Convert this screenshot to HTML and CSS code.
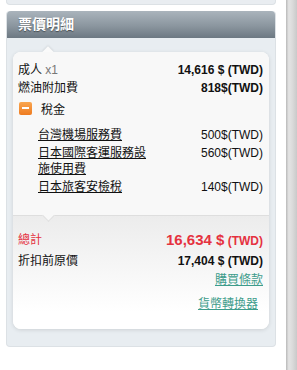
FILE: index.html
```html
<!DOCTYPE html>
<html lang="zh-Hant">
<head>
    <meta charset="UTF-8">
    <meta name="viewport" content="width=device-width, initial-scale=1.0">
    <title>票價明細</title>
    <link rel="stylesheet" href="styles.css">
</head>
<body>
    <div class="page">
        <div class="main">
            <div class="top-panel"></div>

            <div class="fare-panel">
                <div class="fare-header">票價明細</div>
                <div class="fare-body">
                    <div class="card">
                        <div class="card-top">
                            <div class="row">
                                <span>成人 <span class="count">x1</span></span>
                                <span class="amount bold">14,616 $ (TWD)</span>
                            </div>
                            <div class="row">
                                <span>燃油附加費</span>
                                <span class="amount bold">818$(TWD)</span>
                            </div>
                            <div class="tax-head">
                                <span class="toggle"></span>
                                <span>稅金</span>
                            </div>
                            <div class="tax-row">
                                <a class="tax-name" href="#">台灣機場服務費</a>
                                <span class="amount">500$(TWD)</span>
                            </div>
                            <div class="tax-row">
                                <a class="tax-name" href="#">日本國際客運服務設施使用費</a>
                                <span class="amount">560$(TWD)</span>
                            </div>
                            <div class="tax-row">
                                <a class="tax-name" href="#">日本旅客安檢稅</a>
                                <span class="amount">140$(TWD)</span>
                            </div>
                        </div>
                        <div class="card-bottom">
                            <div class="row total">
                                <span>總計</span>
                                <span class="amount bold"><span class="big">16,634 $</span> (TWD)</span>
                            </div>
                            <div class="row sum">
                                <span>折扣前原價</span>
                                <span class="amount bold">17,404 $ (TWD)</span>
                            </div>
                            <div class="link-row">
                                <a href="#" class="teal">購買條款</a>
                            </div>
                            <div class="link-row converter">
                                <a href="#" class="teal">貨幣轉換器</a>
                            </div>
                        </div>
                    </div>
                </div>
            </div>
        </div>
        <div class="edge"></div>
    </div>
</body>
</html>
```

FILE: styles.css
```css
body {
    margin: 0;
    background-color: #ffffff;
    font-family: 'Liberation Sans', Arial, 'Noto Sans CJK TC', sans-serif;
    font-size: 12px;
    color: #111;
}
.page {
    display: flex;
    height: 370px;
}
.main {
    width: 270px;
    padding-left: 6px;
    margin-right: 10px;
}
.edge {
    width: 11px;
    background: linear-gradient(to right, #b9b9b9, #e4e4e4 25%, #dadada 60%, #c9c9c9);
}
.top-panel {
    height: 4px;
    background-color: #e9edf1;
    border: 1px solid #dce1e5;
    border-top: none;
    border-radius: 0 0 4px 4px;
}
.fare-panel {
    margin-top: 6px;
    border: 1px solid #dce1e5;
    border-top: none;
    border-radius: 4px;
    background-color: #e8edf1;
}
.fare-header {
    height: 27px;
    line-height: 27px;
    padding-left: 11px;
    border-radius: 4px 4px 0 0;
    background: linear-gradient(to bottom, #aab4bc, #8b969f 55%, #6c7882);
    color: #ffffff;
    font-size: 14px;
    font-weight: bold;
    text-shadow: 0 1px 1px rgba(0,0,0,0.45);
}
.fare-body {
    padding: 14px 6px 17px 6px;
}
.card {
    position: relative;
    background-color: #ffffff;
    border-radius: 8px;
    box-shadow: 0 1px 4px rgba(0,0,0,0.12);
}
.card::before {
    content: '';
    position: absolute;
    top: -4px;
    left: 31px;
    width: 8px;
    height: 8px;
    background-color: #fafafa;
    transform: rotate(45deg);
    box-shadow: -1px -1px 2px rgba(0,0,0,0.08);
}
.card-top {
    position: relative;
    padding: 9px 6px 19px 5px;
    background-color: #f8f8f8;
    border-radius: 8px 8px 0 0;
    border-bottom: 1px solid #dedede;
}
.card-top::after {
    content: '';
    position: absolute;
    bottom: -5px;
    left: 31px;
    width: 8px;
    height: 8px;
    background-color: #f8f8f8;
    border-right: 1px solid #dedede;
    border-bottom: 1px solid #dedede;
    transform: rotate(45deg);
}
.row {
    display: flex;
    justify-content: space-between;
    line-height: 18px;
}
.count {
    color: #777;
}
.bold {
    font-weight: bold;
}
.tax-head {
    display: flex;
    align-items: center;
    gap: 9px;
    padding-left: 1px;
    height: 22px;
    margin-bottom: 7px;
}
.toggle {
    position: relative;
    width: 13px;
    height: 13px;
    border-radius: 2px;
    background: linear-gradient(to bottom, #f9a650, #ee7b20);
}
.toggle::after {
    content: '';
    position: absolute;
    left: 3px;
    top: 5px;
    width: 7px;
    height: 2px;
    background-color: #ffffff;
}
.tax-row {
    display: flex;
    justify-content: space-between;
    align-items: flex-start;
    padding: 1px 0 1px 20px;
    line-height: 16px;
}
.tax-name {
    width: 112px;
    color: #111;
    text-decoration: underline;
}
.card-bottom {
    padding: 14px 6px 16px 5px;
    background: linear-gradient(to bottom, #ececec, #ffffff 85%);
    border-radius: 0 0 8px 8px;
}
.total, .sum {
    line-height: 20px;
}
.total {
    color: #e5323f;
}
.big {
    font-size: 15px;
}
.link-row {
    text-align: right;
    line-height: 18px;
}
.converter {
    margin-top: 6px;
    padding-right: 5px;
}
.teal {
    color: #3d9c8b;
    text-decoration: underline;
}
```
